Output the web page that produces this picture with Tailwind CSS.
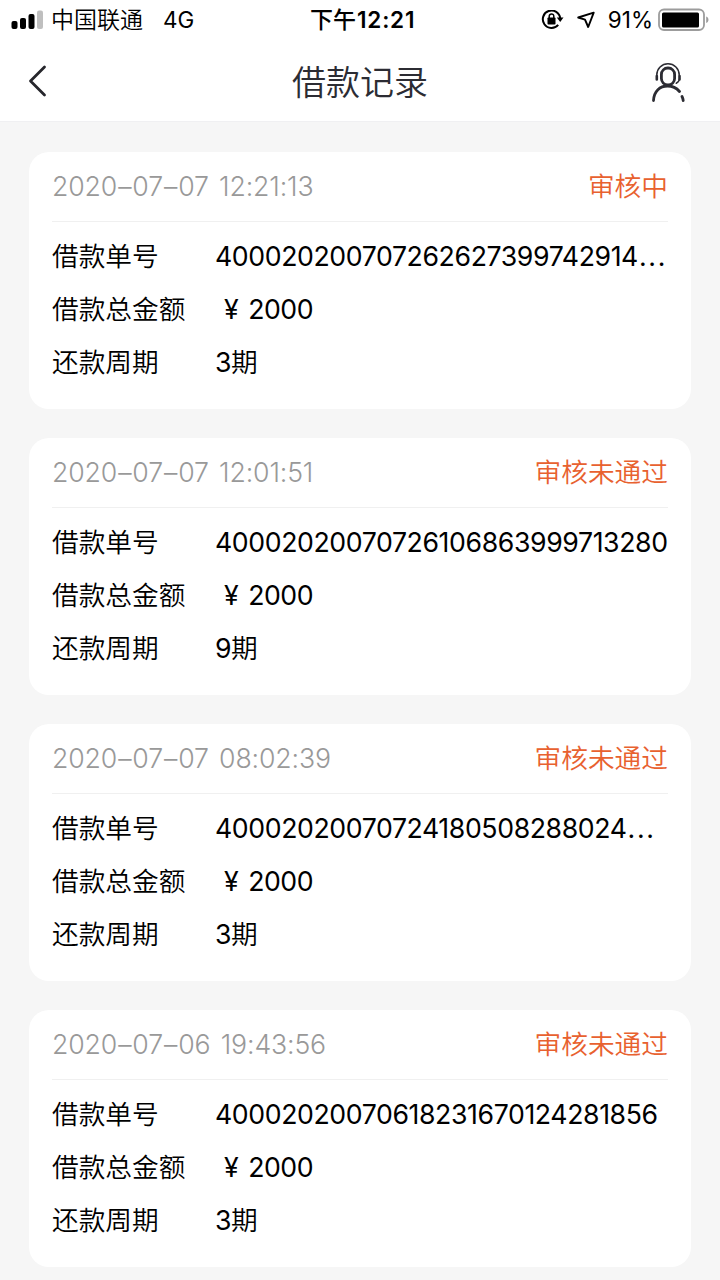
<!DOCTYPE html>
<html lang="zh-CN">
<head>
    <meta charset="UTF-8">
    <meta name="viewport" content="width=device-width, initial-scale=1.0">
    <title>借款记录</title>
    <script src="https://cdn.jsdelivr.net/npm/@tailwindcss/browser@4"></script>
</head>
<body class="h-[1280px] overflow-hidden bg-[#f6f6f6] font-['Inter','Noto_Sans_CJK_SC',sans-serif] text-black">

    <!--状态栏-->
    <div class="grid h-10 grid-cols-3 items-center bg-white text-[23px] leading-10 whitespace-nowrap">
        <div class="flex items-center pl-[11px]">
            <svg width="33" height="20" viewBox="0 0 33 20">
                <rect x="0.5" y="11" width="6" height="8" rx="2"/>
                <rect x="9" y="8" width="6" height="11" rx="2"/>
                <rect x="17.5" y="4" width="6" height="15" rx="2"/>
                <rect x="26" y="0.5" width="6" height="18.5" rx="2" fill="#bfbfbf"/>
            </svg>
            <span class="ml-[7px] font-[350]">中国联通</span>
            <span class="ml-5 text-[22.5px]">4G</span>
        </div>
        <div class="pl-[70px] font-medium"><span>下午</span><span class="ml-px text-[22.5px] font-semibold tracking-[0.8px]">12:21</span></div>
        <div class="flex items-center justify-end pr-[10px]">
            <svg width="23" height="20" viewBox="0 0 23 20" fill="none" stroke="#000" stroke-width="2">
                <path d="M17.2 14.8A8.7 8.7 0 1 1 19.2 8.5"/>
                <path d="M15.8 7.6h6.7l-3.300 4.400z" fill="#000" stroke="none"/>
                <rect x="6.5" y="7.5" width="8" height="7" rx="0.8" fill="#000" stroke="none"/>
                <path d="M8.2 8.5V6.2a2.3 2.3 0 0 1 4.6 0v2.3" stroke-width="1.5"/>
            </svg>
            <svg class="ml-3" width="20" height="20" viewBox="0 0 20 20" fill="none" stroke="#000" stroke-width="1.9" stroke-linejoin="round">
                <path d="M17.7 2.7L2.2 7.5L9 9.6L12.2 17Z"/>
            </svg>
            <span class="ml-[12px] text-[22.5px]">91%</span>
            <svg class="ml-[5px]" width="52" height="24" viewBox="0 0 52 24">
                <rect x="1" y="1.5" width="45" height="20.5" rx="5" fill="none" stroke="#9c9c9c" stroke-width="1.8"/>
                <rect x="4" y="4.5" width="37" height="15" rx="1.5"/>
                <path d="M48.2 8.5c3 1 3 5.500 0 6.500z" fill="#9c9c9c"/>
            </svg>
        </div>
    </div>

    <!--导航栏-->
    <header class="grid h-[82px] grid-cols-3 items-center border-b border-[#f0f0f2] bg-white text-[#2c2c33]">
        <svg class="ml-[27px]" width="22" height="34" viewBox="0 0 22 34" fill="none" stroke="#26262c" stroke-width="2.8" stroke-linecap="round" stroke-linejoin="round">
            <path d="M17.5 3L3.5 17L17.5 31"/>
        </svg>
        <h1 class="pt-[4px] text-center text-[34px] leading-none font-[350]">借款记录</h1>
        <svg class="mr-[32px] justify-self-end" width="38" height="43" viewBox="0 0 38 43" fill="none" stroke="#2c2c33" stroke-linecap="round">
            <rect x="11.4" y="9" width="13.2" height="17" rx="6.4" stroke-width="2.8"/>
            <path d="M6.8 16A11.2 11.2 0 0 1 29.2 16M29.5 20q-.5 3-3.2 4.3" stroke-width="1.5"/>
            <path d="M6.8 17v3.500M29.5 17v3.500" stroke-width="2.6"/>
            <path d="M3.5 41.5C4 32 10 27 17.5 27C22.5 27 26.5 29 29.5 32.5M32 37.5q1 2 1.2 4" stroke-width="2.8"/>
        </svg>
    </header>

    <!--借款列表-->
    <main class="flex flex-col gap-[29px] px-[29px] pt-[29.6px] text-[26.7px] whitespace-nowrap">

        <section class="h-[257px] shrink-0 rounded-[20px] bg-white px-[23px]">
            <div class="flex h-[70px] items-center justify-between border-b border-[#f0f0f0]">
                <span class="font-light tracking-[-0.15px] [word-spacing:3px] text-[#999]">2020<span class="mx-px">–</span>07<span class="mx-px">–</span>07 12:21:13</span>
                <span class="font-[350] text-[#e8612f]">审核中</span>
            </div>
            <dl class="grid grid-cols-[163px_1fr] pt-[8px] leading-[53px]">
                <dt class="font-[350]">借款单号</dt>
                <dd class="tracking-[-0.4px]">400020200707262627399742914<span class="ml-px tracking-[1.7px]">...</span></dd>
                <dt class="font-[350]">借款总金额</dt>
                <dd class="pl-[9px] tracking-[-0.5px] [word-spacing:3px]">¥ 2000</dd>
                <dt class="font-[350]">还款周期</dt>
                <dd class="tracking-[-0.5px]">3<span class="font-[350]">期</span></dd>
            </dl>
        </section>

        <section class="h-[257px] shrink-0 rounded-[20px] bg-white px-[23px]">
            <div class="flex h-[70px] items-center justify-between border-b border-[#f0f0f0]">
                <span class="font-light tracking-[-0.15px] [word-spacing:3px] text-[#999]">2020<span class="mx-px">–</span>07<span class="mx-px">–</span>07 12:01:51</span>
                <span class="font-[350] text-[#e8612f]">审核未通过</span>
            </div>
            <dl class="grid grid-cols-[163px_1fr] pt-[8px] leading-[53px]">
                <dt class="font-[350]">借款单号</dt>
                <dd class="tracking-[-0.4px]">40002020070726106863999713280</dd>
                <dt class="font-[350]">借款总金额</dt>
                <dd class="pl-[9px] tracking-[-0.5px] [word-spacing:3px]">¥ 2000</dd>
                <dt class="font-[350]">还款周期</dt>
                <dd class="tracking-[-0.5px]">9<span class="font-[350]">期</span></dd>
            </dl>
        </section>

        <section class="h-[257px] shrink-0 rounded-[20px] bg-white px-[23px]">
            <div class="flex h-[70px] items-center justify-between border-b border-[#f0f0f0]">
                <span class="font-light tracking-[-0.15px] [word-spacing:3px] text-[#999]">2020<span class="mx-px">–</span>07<span class="mx-px">–</span>07 08:02:39</span>
                <span class="font-[350] text-[#e8612f]">审核未通过</span>
            </div>
            <dl class="grid grid-cols-[163px_1fr] pt-[8px] leading-[53px]">
                <dt class="font-[350]">借款单号</dt>
                <dd class="tracking-[-0.4px]">40002020070724180508288024<span class="ml-px tracking-[1.7px]">...</span></dd>
                <dt class="font-[350]">借款总金额</dt>
                <dd class="pl-[9px] tracking-[-0.5px] [word-spacing:3px]">¥ 2000</dd>
                <dt class="font-[350]">还款周期</dt>
                <dd class="tracking-[-0.5px]">3<span class="font-[350]">期</span></dd>
            </dl>
        </section>

        <section class="h-[257px] shrink-0 rounded-[20px] bg-white px-[23px]">
            <div class="flex h-[70px] items-center justify-between border-b border-[#f0f0f0]">
                <span class="font-light tracking-[-0.15px] [word-spacing:3px] text-[#999]">2020<span class="mx-px">–</span>07<span class="mx-px">–</span>06 19:43:56</span>
                <span class="font-[350] text-[#e8612f]">审核未通过</span>
            </div>
            <dl class="grid grid-cols-[163px_1fr] pt-[8px] leading-[53px]">
                <dt class="font-[350]">借款单号</dt>
                <dd class="tracking-[-0.4px]">4000202007061823167012428​1856</dd>
                <dt class="font-[350]">借款总金额</dt>
                <dd class="pl-[9px] tracking-[-0.5px] [word-spacing:3px]">¥ 2000</dd>
                <dt class="font-[350]">还款周期</dt>
                <dd class="tracking-[-0.5px]">3<span class="font-[350]">期</span></dd>
            </dl>
        </section>
    </main>
</body>
</html>
